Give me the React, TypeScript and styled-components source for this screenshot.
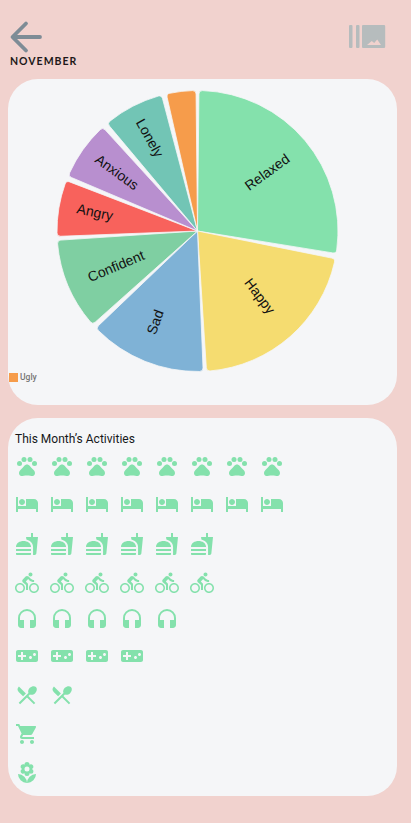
import React from "react";
import styled, { createGlobalStyle } from "styled-components";
import {
  MdPets, MdHotel, MdFastfood, MdDirectionsBike, MdHeadset,
  MdVideogameAsset, MdRestaurantMenu, MdShoppingCart, MdLocalFlorist,
} from "react-icons/md";

const Global = createGlobalStyle`
  html, body { margin: 0; padding: 0; background: #f1d2ce; }
  body { font-family: "Roboto", "Liberation Sans", sans-serif; }
`;

const Page = styled.div`
  width: 411px;
  height: 823px;
  background: #f1d2ce;
  padding: 20px 14px 0 8px;
  box-sizing: border-box;
  overflow: hidden;
`;
const Header = styled.header`
  display: flex;
  justify-content: space-between;
  align-items: flex-start;
  height: 33px;
  padding: 0 10px 0 1px;
`;
const Album = styled.svg`
  width: 38px;
  height: 24px;
  margin: 5px 0 0 0;
  fill: #b6bcbd;
`;
const Back = styled.svg`
  width: 34px;
  height: 34px;
  fill: none;
  stroke: #7e8c96;
  stroke-width: 3.8;
  stroke-linecap: round;
  stroke-linejoin: round;
`;
const Month = styled.div`
  font-family: "Lato", "Liberation Sans", sans-serif;
  font-weight: 700;
  font-size: 10.5px;
  line-height: 12px;
  letter-spacing: 1px;
  color: #201818;
  margin: 2px 0 0 2px;
`;
const ChartCard = styled.section`
  position: relative;
  height: 326px;
  margin-top: 12px;
  background: #f5f6f8;
  border-radius: 30px;
`;
const PieSvg = styled.svg`
  display: block;
  width: 389px;
  height: 326px;
`;
const Legend = styled.div`
  position: absolute;
  left: 1px;
  bottom: 23px;
  display: flex;
  align-items: center;
  gap: 2px;
  font-size: 8.5px;
  font-weight: 500;
  line-height: 9px;
  color: #757575;
`;
const Swatch = styled.span<{ $color: string }>`
  width: 9px;
  height: 9px;
  background: ${(p) => p.$color};
`;
const ActivityCard = styled.section`
  height: 378px;
  margin-top: 13px;
  padding: 14px 0 0 7px;
  box-sizing: border-box;
  background: #f5f6f8;
  border-radius: 30px;
`;
const ActivityTitle = styled.h2`
  margin: 0 0 7px;
  font-size: 12px;
  font-weight: 400;
  line-height: 15px;
  color: #16181a;
`;
const IconRow = styled.div<{ $after: number }>`
  display: flex;
  gap: 11px;
  height: 24px;
  margin-bottom: ${(p) => p.$after}px;
  color: #84e1ac;
`;

const CX = 189.5;
const CY = 152;
const R = 140.5;

function pt(deg: number, r: number) {
  const a = ((deg - 90) * Math.PI) / 180;
  return `${(CX + r * Math.cos(a)).toFixed(2)} ${(CY + r * Math.sin(a)).toFixed(2)}`;
}
function wedge(a0: number, a1: number) {
  const k = 3.5;
  const d = (k / R) * (180 / Math.PI);
  return `M${CX} ${CY} L${pt(a0, R - k)} Q${pt(a0, R)} ${pt(a0 + d, R)} A${R} ${R} 0 ${a1 - a0 > 180 ? 1 : 0} 1 ${pt(a1 - d, R)} Q${pt(a1, R)} ${pt(a1, R - k)} Z`;
}

const slices = [
  { a0: 0.6, a1: 99.2, color: "#84e1ac", label: "Relaxed", x: 259, y: 93, rot: -36 },
  { a0: 101.4, a1: 176.3, color: "#f5dc70", label: "Happy", x: 252, y: 217, rot: 53 },
  { a0: 177.7, a1: 226.3, color: "#7fb2d6", label: "Sad", x: 147, y: 243, rot: -70 },
  { a0: 228.3, a1: 266.2, color: "#7fcfa2", label: "Confident", x: 108, y: 187, rot: -23 },
  { a0: 267.8, a1: 291, color: "#f8625c", label: "Angry", x: 87, y: 133, rot: 12 },
  { a0: 293, a1: 317.6, color: "#b88fcf", label: "Anxious", x: 109, y: 93, rot: 36 },
  { a0: 320, a1: 345.2, color: "#72c5b5", label: "Lonely", x: 142, y: 59, rot: 61 },
  { a0: 347.2, a1: 359.4, color: "#f69c4b", label: "", x: 0, y: 0, rot: 0 },
];

const rows: [React.ComponentType<{ size?: number }>, number, number][] = [
  [MdPets, 8, 14],
  [MdHotel, 8, 16],
  [MdFastfood, 6, 15],
  [MdDirectionsBike, 6, 13],
  [MdHeadset, 5, 12],
  [MdVideogameAsset, 4, 15],
  [MdRestaurantMenu, 2, 15],
  [MdShoppingCart, 1, 15],
  [MdLocalFlorist, 1, 0],
];

export default function App() {
  return (
    <Page>
      <Global />
      <Header>
        <Back viewBox="0 0 34 34">
          <path d="M31 17H5M17 3.5 3.5 17 17 30.5" />
        </Back>
        <Album viewBox="0 0 38 24">
          <rect x="0" y="0" width="3.5" height="23" rx="1" />
          <rect x="7" y="0" width="3.5" height="23" rx="1" />
          <path fillRule="evenodd" d="M14 0h21a1.2 1.2 0 0 1 1.2 1.2v20.6a1.2 1.2 0 0 1-1.2 1.2H14a1 1 0 0 1-1-1V1a1 1 0 0 1 1-1ZM18 20h14l-3.8-5.6-3 3.6-2.4-1.9Z" />
        </Album>
      </Header>
      <Month>NOVEMBER</Month>
      <ChartCard>
        <PieSvg viewBox="0 0 389 326">
          {slices.map((s) => (
            <path key={s.color} d={wedge(s.a0, s.a1)} fill={s.color} stroke="#f5f6f8" strokeWidth="0.8" />
          ))}
          {slices.filter((s) => s.label).map((s) => (
            <text
              key={s.label}
              x={s.x}
              y={s.y}
              transform={`rotate(${s.rot} ${s.x} ${s.y})`}
              textAnchor="middle"
              dominantBaseline="central"
              fontFamily="Liberation Sans, Arial, sans-serif"
              fontSize="14"
              fill="#111"
            >
              {s.label}
            </text>
          ))}
        </PieSvg>
        <Legend>
          <Swatch $color="#f69c4b" />
          Ugly
        </Legend>
      </ChartCard>
      <ActivityCard>
        <ActivityTitle>This Month’s Activities</ActivityTitle>
        {rows.map(([Icon, n, after], i) => (
          <IconRow key={i} $after={after}>
            {Array.from({ length: n }, (_, j) => (
              <Icon key={j} size={24} />
            ))}
          </IconRow>
        ))}
      </ActivityCard>
    </Page>
  );
}
